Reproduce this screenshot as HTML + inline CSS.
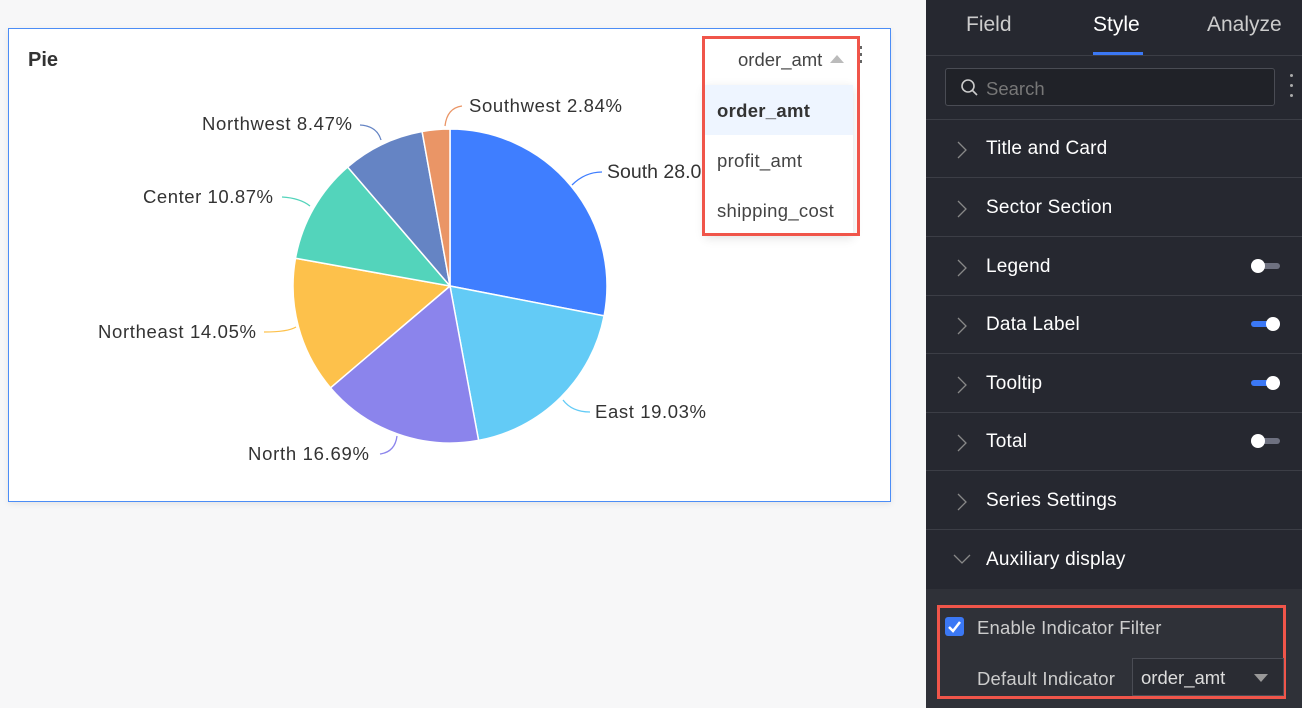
<!DOCTYPE html>
<html><head><meta charset="utf-8"><style>
*{box-sizing:border-box;margin:0;padding:0}
body{width:1302px;height:708px;background:#f7f7f8;font-family:"Liberation Sans",sans-serif;position:relative;overflow:hidden}
.card{position:absolute;left:8px;top:28px;width:883px;height:474px;background:#fff;border:1px solid #4c8df6;box-shadow:0 2px 6px rgba(0,0,0,.08)}
.title{position:absolute;left:19px;top:20px;font-size:20px;font-weight:bold;color:#333}
svg text{font-family:"Liberation Sans",sans-serif;font-size:18.5px;fill:#333}
.dd{position:absolute;left:702px;top:36px;width:158px;height:200px;border:3px solid #f0554a;background:transparent}
.ddhead{position:absolute;left:738px;top:49px;font-size:18.5px;color:#444}
.tri{position:absolute;left:830px;top:55px;width:0;height:0;border-left:7px solid transparent;border-right:7px solid transparent;border-bottom:8px solid #bbb}
.menu{position:absolute;left:705px;top:85px;width:148px;height:150px;background:#fff;box-shadow:0 3px 10px rgba(0,0,0,.12)}
.mi{height:50px;line-height:52px;padding-left:12px;font-size:18.5px;color:#444;letter-spacing:.3px}
.dots{position:absolute;left:859px;top:46px;width:4px}
.dots i{display:block;width:3px;height:3px;background:#666;margin-bottom:4px}
.panel{position:absolute;left:926px;top:0;width:376px;height:708px;background:#262830;color:#fff}
.tabs{height:56px;border-bottom:1px solid #3c3e46;position:relative}
.tab{position:absolute;top:13px;font-size:21px;color:#ccc}
.search{position:absolute;left:19px;top:68px;width:330px;height:38px;border:1px solid #4a4c54;border-radius:3px;background:#202228}
.sep{position:absolute;left:0;width:376px;height:1px;background:#3c3e46}
.row{position:absolute;left:0;width:376px;height:58px;border-bottom:1px solid #3c3e46}
.row span{position:absolute;left:60px;top:18px;font-size:19px;color:#fff;letter-spacing:.2px}
.row svg{position:absolute;left:30px;top:20px}
.tg{position:absolute;left:325px;top:25px;width:29px;height:6px;border-radius:3px;background:#6e7180}
.tg b{position:absolute;top:-4px;width:14px;height:14px;border-radius:7px;background:#fff}
.tg.on{background:#3b78f5}
.aux{position:absolute;left:0;top:589px;width:376px;height:119px;background:#2f3138}
</style></head><body>
<div class="card">
<div class="title">Pie</div>
</div>
<svg width="900" height="520" style="position:absolute;left:0;top:0">
<g stroke="#fff" stroke-width="1.5">
<path d="M450 286 L450 129 A157 157 0 0 1 604.1 315.9Z" fill="#3f7eff"/>
<path d="M450 286 L604.1 315.9 A157 157 0 0 1 478.6 440.4Z" fill="#63cbf6"/>
<path d="M450 286 L478.6 440.4 A157 157 0 0 1 330.5 387.8Z" fill="#8b84ec"/>
<path d="M450 286 L330.5 387.8 A157 157 0 0 1 295.5 258.3Z" fill="#fdc14b"/>
<path d="M450 286 L295.5 258.3 A157 157 0 0 1 347.6 167Z" fill="#53d4bb"/>
<path d="M450 286 L347.6 167 A157 157 0 0 1 422.1 131.5Z" fill="#6584c4"/>
<path d="M450 286 L422.1 131.5 A157 157 0 0 1 450 129Z" fill="#ea9566"/>
</g>
<g fill="none" stroke-width="1.3">
<path d="M445 126 Q447 108 462 106" stroke="#ea9566"/>
<path d="M381 140 Q377 126 360 125" stroke="#6584c4"/>
<path d="M310 206 Q300 198 282 197" stroke="#53d4bb"/>
<path d="M296 327 Q288 332 264 332" stroke="#fdc14b"/>
<path d="M397 436 Q395 452 380 454" stroke="#8b84ec"/>
<path d="M563 400 Q572 412 590 412" stroke="#63cbf6"/>
<path d="M572 185 Q585 172 602 172" stroke="#3f7eff"/>
</g>
<text x="469" y="112" textLength="153">Southwest 2.84%</text>
<text x="202" y="130" textLength="150">Northwest 8.47%</text>
<text x="143" y="203" textLength="130">Center 10.87%</text>
<text x="98" y="338" textLength="158">Northeast 14.05%</text>
<text x="248" y="460" textLength="121">North 16.69%</text>
<text x="595" y="418" textLength="111">East 19.03%</text>
<text x="607" y="178" style="font-size:19.5px">South 28.05%</text>
</svg>
<div class="dots"><i></i><i></i><i></i></div>
<div class="ddhead">order_amt</div><div class="tri"></div>
<div class="menu">
<div class="mi" style="background:#eef5ff;font-weight:bold;color:#333">order_amt</div>
<div class="mi">profit_amt</div>
<div class="mi">shipping_cost</div>
</div>
<div class="dd"></div>

<div class="panel">
<div class="tabs">
<div class="tab" style="left:40px">Field</div>
<div class="tab" style="left:167px;color:#fff">Style</div>
<div class="tab" style="left:281px">Analyze</div>
<div style="position:absolute;left:167px;top:52px;width:50px;height:3px;background:#3b78f5"></div>
</div>
<div class="search">
<svg width="20" height="20" style="position:absolute;left:14px;top:9px"><circle cx="8" cy="8" r="6" fill="none" stroke="#ccc" stroke-width="1.6"/><path d="M12.5 12.5L17 17" stroke="#ccc" stroke-width="1.6"/></svg>
<span style="position:absolute;left:40px;top:9px;font-size:18.5px;color:#777">Search</span>
</div>
<div style="position:absolute;left:364px;top:74px;width:4px"><i style="display:block;width:3px;height:3px;background:#aaa;border-radius:2px;margin-bottom:7px"></i><i style="display:block;width:3px;height:3px;background:#aaa;border-radius:2px;margin-bottom:7px"></i><i style="display:block;width:3px;height:3px;background:#aaa;border-radius:2px"></i></div>
<div class="sep" style="top:119px"></div>
<div class="row" style="top:120px"><svg width="12" height="20"><path d="M2 2L10 10L2 18" fill="none" stroke="#888" stroke-width="1.3"/></svg><span>Title and Card</span></div>
<div class="row" style="top:179px"><svg width="12" height="20"><path d="M2 2L10 10L2 18" fill="none" stroke="#888" stroke-width="1.3"/></svg><span>Sector Section</span></div>
<div class="row" style="top:238px"><svg width="12" height="20"><path d="M2 2L10 10L2 18" fill="none" stroke="#888" stroke-width="1.3"/></svg><span>Legend</span><div class="tg"><b style="left:0"></b></div></div>
<div class="row" style="top:296px"><svg width="12" height="20"><path d="M2 2L10 10L2 18" fill="none" stroke="#888" stroke-width="1.3"/></svg><span>Data Label</span><div class="tg on"><b style="left:15px"></b></div></div>
<div class="row" style="top:355px"><svg width="12" height="20"><path d="M2 2L10 10L2 18" fill="none" stroke="#888" stroke-width="1.3"/></svg><span>Tooltip</span><div class="tg on"><b style="left:15px"></b></div></div>
<div class="row" style="top:413px"><svg width="12" height="20"><path d="M2 2L10 10L2 18" fill="none" stroke="#888" stroke-width="1.3"/></svg><span>Total</span><div class="tg"><b style="left:0"></b></div></div>
<div class="row" style="top:472px"><svg width="12" height="20"><path d="M2 2L10 10L2 18" fill="none" stroke="#888" stroke-width="1.3"/></svg><span>Series Settings</span></div>
<div class="row" style="top:531px;border:none"><svg width="20" height="14" style="left:26px;top:22px"><path d="M2 2L10 10L18 2" fill="none" stroke="#888" stroke-width="1.3"/></svg><span>Auxiliary display</span></div>
<div class="aux">
<div style="position:absolute;left:11px;top:16px;width:349px;height:94px;border:3px solid #f0554a"></div>
<div style="position:absolute;left:19px;top:28px;width:19px;height:19px;background:#3b78f5;border-radius:3px"><svg width="19" height="19"><path d="M4 10L8 14L15 5" fill="none" stroke="#fff" stroke-width="2.5"/></svg></div>
<span style="position:absolute;left:51px;top:28px;font-size:18.5px;color:#ccc;letter-spacing:.2px">Enable Indicator Filter</span>
<span style="position:absolute;left:51px;top:79px;font-size:18.5px;color:#ccc;letter-spacing:.2px">Default Indicator</span>
<div style="position:absolute;left:206px;top:69px;width:152px;height:38px;border:1px solid #4a4c54;background:#2a2c33"><span style="position:absolute;left:8px;top:8px;font-size:18.5px;color:#ddd">order_amt</span><div style="position:absolute;left:121px;top:15px;border-left:7px solid transparent;border-right:7px solid transparent;border-top:8px solid #999"></div></div>
</div>
</div>
</body></html>
